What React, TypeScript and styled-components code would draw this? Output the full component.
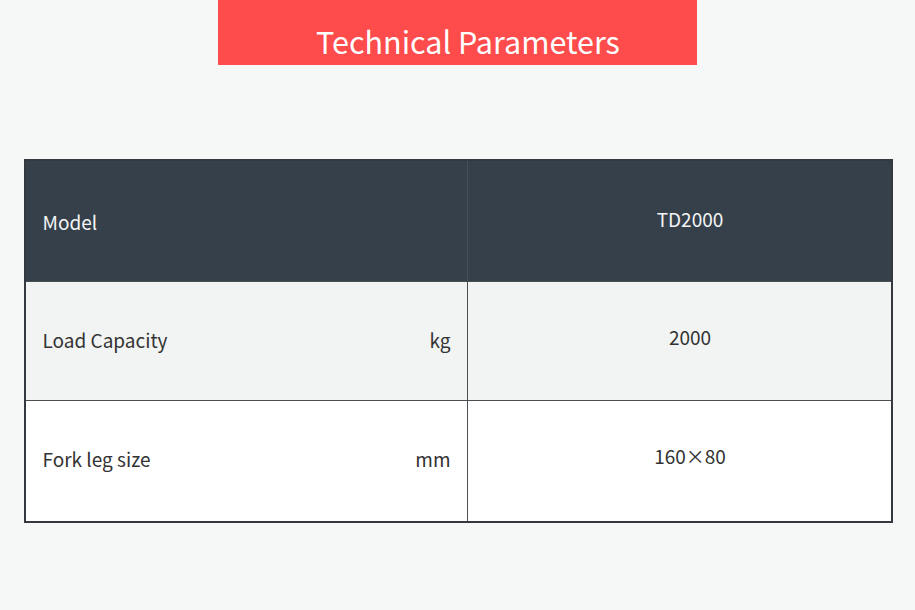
import styled, { createGlobalStyle } from "styled-components";

const GlobalStyle = createGlobalStyle`
  html, body {
    margin: 0;
    padding: 0;
    background: #f6f7f7;
    font-family: "Noto Sans CJK SC", "Noto Sans", "Liberation Sans", sans-serif;
  }
`;

const Page = styled.div`
  width: 915px;
  height: 610px;
  display: flex;
  flex-direction: column;
  align-items: center;
  background: #f6f7f7;
`;

const Banner = styled.div`
  width: 479px;
  height: 65px;
  margin-right: 1px;
  background: #fe4b4b;
  color: #ffffff;
  font-size: 30.5px;
  display: flex;
  align-items: flex-end;
  justify-content: center;
  padding-bottom: 9px;
  box-sizing: border-box;
  line-height: 1;
  & > span {
    padding-left: 22px;
  }
`;

const Table = styled.div`
  margin-top: 94px;
  width: 869px;
  margin-left: 1px;
  border: 2px solid #33393e;
  box-sizing: border-box;
  display: grid;
  grid-template-columns: 442px 1fr;
  font-size: 19px;
`;

type Tone = "head" | "grey" | "white";

const heights: Record<Tone, string> = { head: "121px", grey: "119px", white: "120px" };

const Cell = styled.div<{ $tone: Tone; $last?: boolean }>`
  height: ${(p) => heights[p.$tone]};
  box-sizing: border-box;
  background: ${(p) =>
    p.$tone === "head" ? "#35404a" : p.$tone === "grey" ? "#f2f4f3" : "#ffffff"};
  color: ${(p) => (p.$tone === "head" ? "#f3f4f5" : "#333333")};
  border-bottom: ${(p) => (p.$last ? "none" : "1px solid #4a4f54")};
  display: flex;
  align-items: center;
`;

const LabelCell = styled(Cell)`
  justify-content: space-between;
  padding: 0 16px ${(p) => (p.$tone === "head" ? "0" : p.$tone === "grey" ? "4px" : "6px")} 17px;
  border-right: 1px solid #4a4f54;
`;

const ValueCell = styled(Cell)`
  justify-content: center;
  padding-left: 22px;
  padding-bottom: ${(p) => (p.$tone === "head" ? "5px" : p.$tone === "grey" ? "9px" : "11px")};
`;

const rows = [
  { label: "Model", unit: "", value: "TD2000", tone: "head" as const },
  { label: "Load Capacity", unit: "kg", value: "2000", tone: "grey" as const },
  { label: "Fork leg size", unit: "mm", value: "160×80", tone: "white" as const },
];

export default function App() {
  return (
    <Page>
      <GlobalStyle />
      <Banner>
        <span>Technical Parameters</span>
      </Banner>
      <Table>
        {rows.map((r, i) => {
          const last = i === rows.length - 1;
          return [
            <LabelCell key={r.label} $tone={r.tone} $last={last}>
              <span>{r.label}</span>
              <span>{r.unit}</span>
            </LabelCell>,
            <ValueCell key={r.value} $tone={r.tone} $last={last}>
              {r.value}
            </ValueCell>,
          ];
        })}
      </Table>
    </Page>
  );
}
